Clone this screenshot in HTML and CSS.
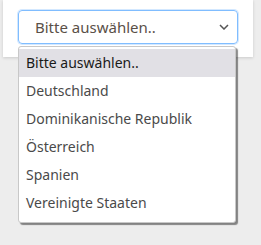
FILE: index.html
```html
<!DOCTYPE html>
<html lang="de">
<head>
  <meta charset="UTF-8">
  <title>Land auswählen</title>
  <link rel="stylesheet" href="styles.css">
</head>
<body>
  <div class="panel">
    <div class="select-box">
      <span class="select-value">Bitte auswählen..</span>
      <svg class="chevron" width="10" height="6" viewBox="0 0 10 6">
        <path d="M1 1 L5 5 L9 1" fill="none" stroke="#555" stroke-width="1.5"/>
      </svg>
    </div>
  </div>
  <ul class="dropdown">
    <li class="option selected">Bitte auswählen..</li>
    <li class="option">Deutschland</li>
    <li class="option">Dominikanische Republik</li>
    <li class="option">Österreich</li>
    <li class="option">Spanien</li>
    <li class="option">Vereinigte Staaten</li>
  </ul>
</body>
</html>
```

FILE: styles.css
```css
/* Grundeinstellungen */
* {
  box-sizing: border-box;
  margin: 0;
  padding: 0;
}
body {
  font-family: 'Noto Sans', 'Open Sans', sans-serif;
  background: #ededed;
  width: 261px;
  height: 245px;
  position: relative;
  overflow: hidden;
}
.panel {
  margin: 0 8px 0 3px;
  height: 57px;
  padding: 10px 15px 0;
  background: #fff;
  box-shadow: 0 1px 3px rgba(0, 0, 0, 0.15);
}
.select-box {
  display: flex;
  align-items: center;
  justify-content: space-between;
  height: 34px;
  padding: 0 8px 0 16px;
  border: 1px solid #80bdff;
  border-radius: 4px;
  box-shadow: 0 0 0 1px rgba(128, 189, 255, 0.35);
  font-size: 15px;
  color: #5a5048;
}
.chevron {
  display: block;
}
/* geöffnete Liste */
.dropdown {
  position: absolute;
  top: 46px;
  left: 18px;
  width: 218px;
  padding: 2px 0 5px;
  list-style: none;
  background: #fff;
  border: 1px solid #c8c8c8;
  border-radius: 3px;
  box-shadow: 2px 2px 1px rgba(0, 0, 0, 0.45);
}
.option {
  height: 28px;
  line-height: 28px;
  padding-left: 7px;
  font-size: 14px;
  color: #4a4a4a;
}
.option.selected {
  background: #e1e0e5;
  color: #1a1a1a;
}
```
